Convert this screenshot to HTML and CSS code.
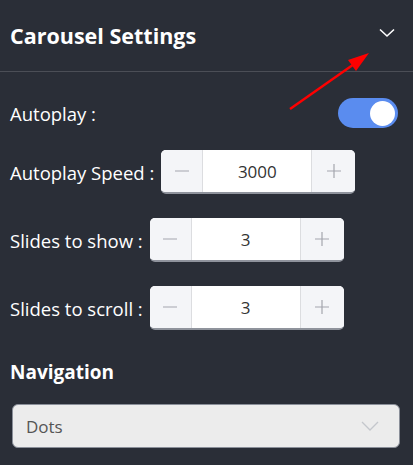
FILE: index.html
```html
<!DOCTYPE html>
<html>
<head>
<meta charset="utf-8">
<link rel="stylesheet" href="styles.css">
</head>
<body>
<div class="panel">
  <div class="header">
    <span class="title">Carousel Settings</span>
    <svg class="chev" width="16" height="10" viewBox="0 0 16 10"><path d="M1 1.5 L8 8 L15 1.5" fill="none" stroke="#fff" stroke-width="1.6"/></svg>
  </div>
  <div class="body">
    <div class="row autoplay">
      <span class="label">Autoplay :</span>
      <span class="toggle"><span class="knob"></span></span>
    </div>
    <div class="row">
      <span class="label">Autoplay Speed :</span>
      <div class="stepper">
        <span class="btn"><svg width="14" height="14" viewBox="0 0 14 14"><path d="M0 7 H14" stroke="#a3a6ad" stroke-width="1.2"/></svg></span>
        <span class="val">3000</span>
        <span class="btn"><svg width="14" height="14" viewBox="0 0 14 14"><path d="M0 7 H14 M7 0 V14" stroke="#a3a6ad" stroke-width="1.2"/></svg></span>
      </div>
    </div>
    <div class="row">
      <span class="label">Slides to show :</span>
      <div class="stepper">
        <span class="btn"><svg width="14" height="14" viewBox="0 0 14 14"><path d="M0 7 H14" stroke="#a3a6ad" stroke-width="1.2"/></svg></span>
        <span class="val">3</span>
        <span class="btn"><svg width="14" height="14" viewBox="0 0 14 14"><path d="M0 7 H14 M7 0 V14" stroke="#a3a6ad" stroke-width="1.2"/></svg></span>
      </div>
    </div>
    <div class="row">
      <span class="label">Slides to scroll :</span>
      <div class="stepper">
        <span class="btn"><svg width="14" height="14" viewBox="0 0 14 14"><path d="M0 7 H14" stroke="#a3a6ad" stroke-width="1.2"/></svg></span>
        <span class="val">3</span>
        <span class="btn"><svg width="14" height="14" viewBox="0 0 14 14"><path d="M0 7 H14 M7 0 V14" stroke="#a3a6ad" stroke-width="1.2"/></svg></span>
      </div>
    </div>
    <h3 class="section">Navigation</h3>
    <div class="select">
      <span>Dots</span>
      <svg width="18" height="10" viewBox="0 0 18 10"><path d="M1 1 L9 9 L17 1" fill="none" stroke="#c4c7cc" stroke-width="1.3"/></svg>
    </div>
  </div>
  <svg class="arrow" width="413" height="465" viewBox="0 0 413 465">
    <line x1="290" y1="109" x2="357" y2="62" stroke="#f00" stroke-width="2.4"/>
    <polygon points="369,53 348,60 356,71" fill="#f00"/>
  </svg>
</div>
</body>
</html>
```
FILE: styles.css
```css
* { box-sizing: border-box; }
html, body { margin: 0; padding: 0; background: #2a2e37; }
body { font-family: "Open Sans", "Noto Sans", sans-serif; color: #fff; width: 413px; height: 465px; overflow: hidden; }
.panel { position: relative; height: 465px; }
.header {
  height: 72px;
  display: flex;
  align-items: center;
  justify-content: space-between;
  padding: 0 18px 0 10px;
  border-bottom: 1px solid #4b4e56;
}
.title { font-size: 21.5px; font-weight: 700; letter-spacing: 0; }
.chev { margin-top: -6px; }
.body { padding: 26px 10px 0 10px; }
.row { display: flex; align-items: center; margin-bottom: 24px; font-size: 18.5px; }
.row.autoplay { justify-content: space-between; height: 30px; padding-right: 5px; margin-bottom: 22px; }
.label { margin-right: 7px; }
.toggle {
  width: 60px; height: 30px; border-radius: 15px; background: #5a8cef;
  display: flex; align-items: center; justify-content: flex-end; padding-right: 3px;
}
.knob { width: 25px; height: 25px; border-radius: 50%; background: #fff; }
.stepper {
  display: flex; height: 44px; width: 194px; border-radius: 5px;
  background: #fff; overflow: hidden; border-bottom: 2px solid #8f939c;
}
.btn {
  width: 42px; background: #f4f5f8; display: flex; align-items: center; justify-content: center;
}
.btn:first-child { border-right: 1px solid #dcdde0; }
.btn:last-child { border-left: 1px solid #dcdde0; width: 44px; }
.val { flex: 1; display: flex; align-items: center; justify-content: center; color: #333; font-size: 17px; }
.section { font-size: 19px; font-weight: 700; margin: 30px 0 0 0; line-height: 24px; }
.select {
  margin: 20px 3px 0 2px; height: 44px; background: #ececec; border: 1px solid #8a8f99; border-radius: 6px;
  display: flex; align-items: center; justify-content: space-between; padding: 0 20px 0 13px;
  color: #555; font-size: 17px;
}
.arrow { position: absolute; left: 0; top: 0; pointer-events: none; }
```
